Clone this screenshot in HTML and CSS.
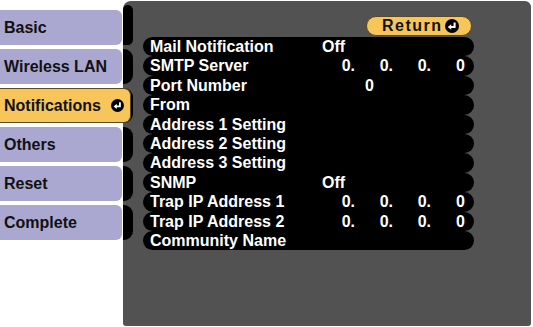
FILE: index.html
```html
<!DOCTYPE html>
<html lang="en">
<head>
  <meta charset="UTF-8" />
  <title>Notifications</title>
  <link rel="stylesheet" href="styles.css">
</head>
<body>

  <div class="screen">
    <div class="side-menu">
      <div class="menu-item">Basic</div>
      <div class="menu-item">Wireless LAN</div>
      <div class="menu-item active">Notifications
        <svg class="enter-icon" viewBox="0 0 14 14"><circle cx="7" cy="7" r="7" fill="#000"/><path d="M9.6 3.4v4.6H5.4" stroke="#fff" stroke-width="2" fill="none"/><path d="M2.8 8 L6.2 5.2 L6.2 10.8 Z" fill="#fff"/></svg>
      </div>
      <div class="menu-item">Others</div>
      <div class="menu-item">Reset</div>
      <div class="menu-item">Complete</div>
    </div>

    <div class="panel">
      <div class="tabs">
        <div class="tab first"></div>
        <div class="tab"></div>
        <div class="tab"></div>
        <div class="tab"></div>
        <div class="tab"></div>
        <div class="tab"></div>
      </div>

      <div class="content">
        <div class="top-bar">
          <div class="return-btn"><span class="label">Return</span>
            <svg class="enter-icon" viewBox="0 0 14 14"><circle cx="7" cy="7" r="7" fill="#000"/><path d="M9.6 3.4v4.6H5.4" stroke="#fff" stroke-width="2" fill="none"/><path d="M2.8 8 L6.2 5.2 L6.2 10.8 Z" fill="#fff"/></svg>
          </div>
        </div>

        <div class="settings">
          <div class="row"><span>Mail Notification</span><span class="val text">Off</span></div>
          <div class="row"><span>SMTP Server</span><span class="val ip"><i>0.</i><i>0.</i><i>0.</i><i class="last">0</i></span></div>
          <div class="row"><span>Port Number</span><span class="val port">0</span></div>
          <div class="row"><span>From</span></div>
          <div class="row"><span>Address 1 Setting</span></div>
          <div class="row"><span>Address 2 Setting</span></div>
          <div class="row"><span>Address 3 Setting</span></div>
          <div class="row"><span>SNMP</span><span class="val text">Off</span></div>
          <div class="row"><span>Trap IP Address 1</span><span class="val ip"><i>0.</i><i>0.</i><i>0.</i><i class="last">0</i></span></div>
          <div class="row"><span>Trap IP Address 2</span><span class="val ip"><i>0.</i><i>0.</i><i>0.</i><i class="last">0</i></span></div>
          <div class="row"><span>Community Name</span></div>
        </div>
      </div>
    </div>
  </div>

</body>
</html>
```

FILE: styles.css
```css
:root {
  --lavender: #aaa8d0;
  --yellow: #f7c55a;
  --panel: #525252;
}

body {
  margin: 0;
  background: #fff;
  font-family: 'Liberation Sans', Arial, sans-serif;
  font-weight: bold;
  font-size: 16px;
}

.screen {
  display: flex;
  width: 533px;
  height: 327px;
}

/* left menu */
.side-menu {
  width: 123px;
  padding-top: 10px;
  display: flex;
  flex-direction: column;
  gap: 4px;
}

.menu-item {
  height: 35px;
  width: 122px;
  box-sizing: border-box;
  padding-left: 4px;
  display: flex;
  align-items: center;
  background: var(--lavender);
  color: #111;
  border-radius: 0 6px 6px 0;
}

.menu-item.active {
  position: relative;
  z-index: 2;
  width: 131px;
  background: var(--yellow);
  border: 1px solid #5a4a24;
  border-left: none;
  border-radius: 0 7px 7px 0;
}

.menu-item .enter-icon {
  width: 13px;
  height: 13px;
  margin-left: 10px;
}

/* right panel */
.panel {
  flex: 1;
  margin: 1px 2px 1px 0;
  background: var(--panel);
  border-radius: 8px 6px 3px 3px;
  display: flex;
}

.tabs {
  width: 10px;
  padding-top: 4px;
  display: flex;
  flex-direction: column;
  gap: 4px;
}

.tab {
  height: 35px;
  background: #000;
  border-radius: 0 9px 9px 0;
}

.tab.first {
  height: 40px;
  border-radius: 8px 9px 9px 0;
}

.content {
  flex: 1;
  padding: 15px 57px 0 10px;
}

.top-bar {
  display: flex;
  justify-content: flex-end;
  padding-right: 2px;
  margin-bottom: 1px;
}

.return-btn {
  width: 106px;
  height: 20px;
  box-sizing: border-box;
  padding-left: 15px;
  display: flex;
  align-items: center;
  background: var(--yellow);
  border: 1px solid #5a4a24;
  border-radius: 10px;
  color: #111;
}

.return-btn .label {
  letter-spacing: 1.5px;
}

.return-btn .enter-icon {
  width: 14px;
  height: 14px;
  margin-left: 2px;
}

.settings {
  display: flex;
  flex-direction: column;
}

.row {
  height: 19.4px;
  line-height: 19.4px;
  display: grid;
  grid-template-columns: 167px auto;
  padding-left: 7px;
  background: #000;
  color: #fff;
  border-radius: 10px;
}

.val.text {
  padding-left: 5px;
}

.val.port {
  padding-left: 48px;
}

.val.ip {
  display: flex;
}

.val.ip i {
  font-style: normal;
  width: 38px;
  text-align: right;
}

.val.ip i.last {
  width: 34px;
}
```
